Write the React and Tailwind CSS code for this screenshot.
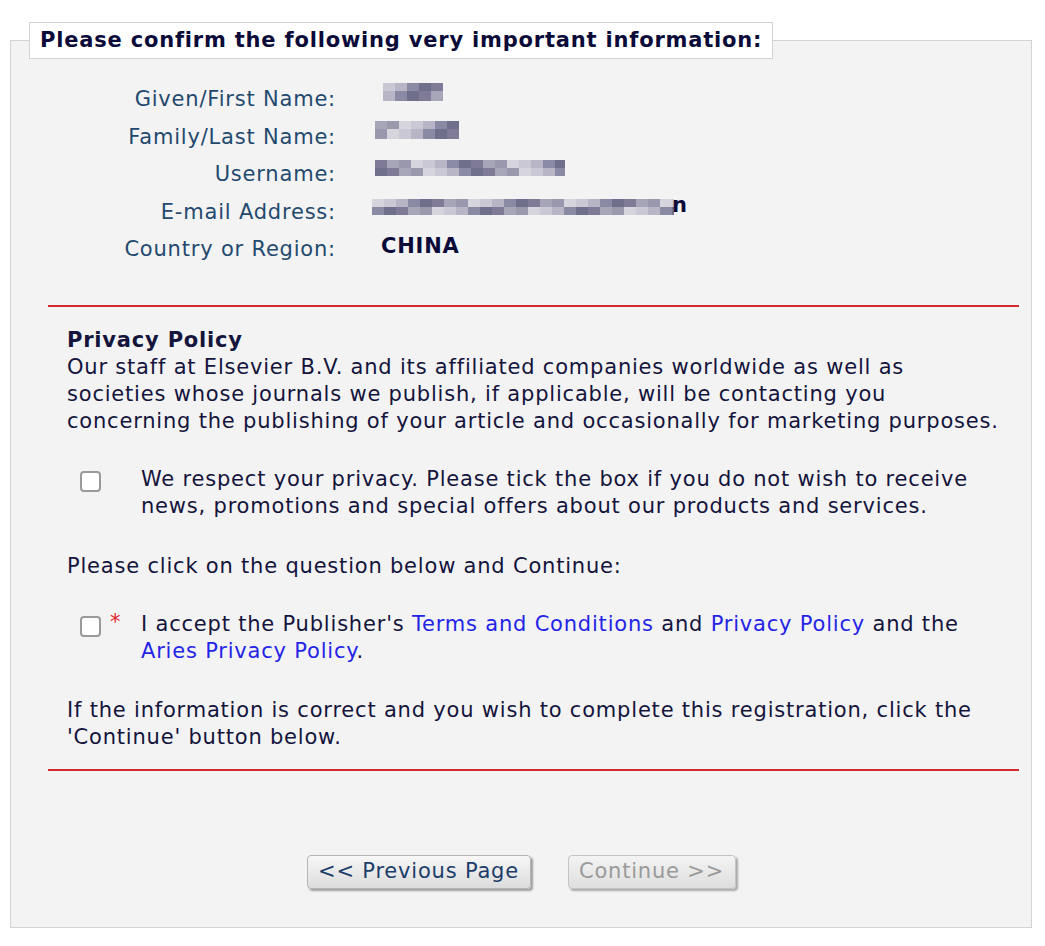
import React from "react";

const font = { fontFamily: '"DejaVu Sans", Verdana, sans-serif' };

// pixelated blur blocks for the masked values
function Mosaic({ cells, w, tail }) {
  return (
    <span className="inline-flex items-end">
      <svg width={w} height="24" viewBox={`0 0 ${w} 24`} className="block">
        {cells.map((c, i) => (
          <rect key={i} x={c[0]} y={c[1]} width={c[2]} height={c[3]} fill={c[4]} />
        ))}
      </svg>
      {tail && <span className="font-bold text-[#0b0b3a] -ml-[2px]">{tail}</span>}
    </span>
  );
}

const grays = ["#8a8aa4", "#a7a5b8", "#c9c8d4", "#6f6f8c", "#9a98ad", "#b8b6c6", "#7f7a95", "#d6d5de"];

function row(x0, n, y, h, size, seed) {
  const out = [];
  for (let i = 0; i < n; i++) {
    out.push([x0 + i * size, y, size, h, grays[(i * 3 + seed) % grays.length]]);
  }
  return out;
}

const firstName = [...row(2, 5, 2, 8, 12, 2), ...row(2, 5, 10, 10, 12, 5)];
const lastName = [...row(0, 7, 2, 8, 12, 1), ...row(0, 7, 10, 10, 12, 4)];
const userName = [...row(0, 16, 4, 8, 12, 6), ...row(0, 16, 12, 8, 12, 3)];
const email = [...row(0, 26, 4, 8, 12, 7), ...row(0, 26, 12, 8, 12, 0)];

function InfoRow({ label, children }) {
  return (
    <div className="grid grid-cols-[325px_1fr] gap-x-[45px] h-[37.5px] items-center">
      <div className="text-right text-[#23496e]">{label}</div>
      <div className="-mt-[6px]">{children}</div>
    </div>
  );
}

function Box() {
  return (
    <span className="inline-block w-[21px] h-[21px] rounded-[4px] border-2 border-[#9a9a9a] bg-white shrink-0" />
  );
}

export default function App() {
  return (
    <div
      className="bg-white min-h-[946px] pt-[22px] text-[21px] leading-[27px] tracking-[0.8px] text-[#14143c]"
      style={font}
    >
      <fieldset className="ml-[10px] w-[1022px] border border-[#d3d3d3] bg-[#f3f3f3] pb-[38px]">
        <legend className="ml-[18px] h-[37px] bg-white border border-[#d3d3d3] px-[10px] font-bold text-[21px] leading-[35px] text-[#0b0b3a]">
          Please confirm the following very important information:
        </legend>

        <div className="pt-[22px]">
          <InfoRow label="Given/First Name:">
            <Mosaic cells={firstName} w={64} />
          </InfoRow>
          <InfoRow label="Family/Last Name:">
            <span className="-ml-[6px] inline-block"><Mosaic cells={lastName} w={86} /></span>
          </InfoRow>
          <InfoRow label="Username:">
            <span className="-ml-[6px] inline-block"><Mosaic cells={userName} w={190} /></span>
          </InfoRow>
          <InfoRow label="E-mail Address:">
            <span className="-ml-[9px] inline-block"><Mosaic cells={email} w={302} tail="n" /></span>
          </InfoRow>
          <InfoRow label="Country or Region:">
            <span className="font-bold text-[#0b0b3a]">CHINA</span>
          </InfoRow>
        </div>

        <div className="mt-[36px] ml-[37px] mr-[12px] h-[2px] bg-[#d8292f]" />

        <div className="pl-[56px] pr-[10px] pt-[20px]">
          <div className="font-bold">Privacy Policy</div>
          <p>
            Our staff at Elsevier B.V. and its affiliated companies worldwide as well as
            <br />
            societies whose journals we publish, if applicable, will be contacting you
            <br />
            concerning the publishing of your article and occasionally for marketing purposes.
          </p>

          <div className="mt-[31px] flex items-start">
            <div className="w-[74px] flex pl-[13px] pt-[5px]">
              <Box />
            </div>
            <div>
              We respect your privacy. Please tick the box if you do not wish to receive
              <br />
              news, promotions and special offers about our products and services.
            </div>
          </div>

          <p className="mt-[33px]">Please click on the question below and Continue:</p>

          <div className="mt-[31px] flex items-start">
            <div className="w-[74px] flex items-start pl-[13px] pt-[5px] gap-[9px]">
              <Box />
              <span className="text-[#e0242a] leading-[14px] -mt-[1px]">*</span>
            </div>
            <div>
              I accept the Publisher's <a className="text-[#2424e6]">Terms and Conditions</a> and{" "}
              <a className="text-[#2424e6]">Privacy Policy</a> and the
              <br />
              <a className="text-[#2424e6]">Aries Privacy Policy</a>.
            </div>
          </div>

          <p className="mt-[32px]">
            If the information is correct and you wish to complete this registration, click the
            <br />
            'Continue' button below.
          </p>
        </div>

        <div className="mt-[18px] ml-[37px] mr-[12px] h-[2px] bg-[#d8292f]" />

        <div className="mt-[84px] flex justify-center gap-[37px]">
          <button className="h-[34px] w-[224px] rounded-[4px] border border-[#b5b5b5] bg-gradient-to-b from-[#f7f7f7] to-[#dcdcdc] text-[21px] text-[#1c3d6a] shadow-[2px_2px_2px_rgba(0,0,0,0.35)]">
            &lt;&lt; Previous Page
          </button>
          <button
            disabled
            className="h-[34px] w-[168px] rounded-[4px] border border-[#c4c4c4] bg-gradient-to-b from-[#f4f4f4] to-[#dedede] text-[21px] text-[#9a9a9a] shadow-[2px_2px_2px_rgba(0,0,0,0.3)]"
          >
            Continue &gt;&gt;
          </button>
        </div>
      </fieldset>
    </div>
  );
}
